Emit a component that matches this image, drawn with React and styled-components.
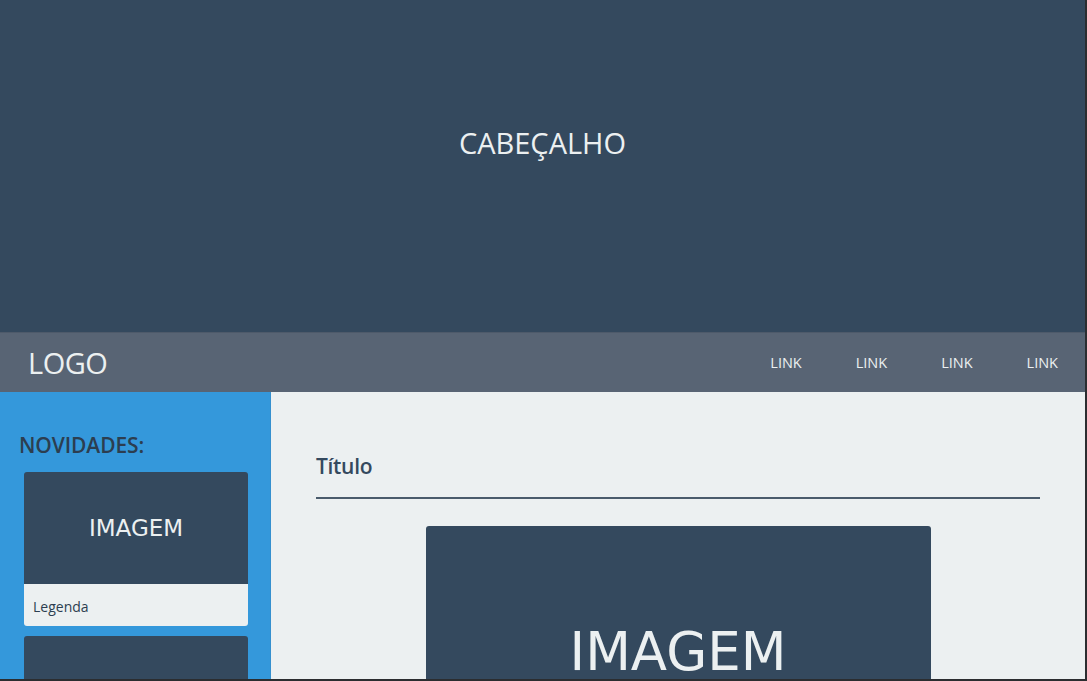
import React from 'react';
import styled, { createGlobalStyle } from 'styled-components';

const GlobalStyle = createGlobalStyle`
  html, body {
    margin: 0;
    padding: 0;
    background: #2b2d30;
    overflow: hidden;
  }
  * { box-sizing: border-box; }
`;

const links = ['LINK', 'LINK', 'LINK', 'LINK'];

export default function App() {
  return (
    <>
      <GlobalStyle />
      <Page>
        <Header>CABEÇALHO</Header>
        <Nav>
          <Logo>LOGO</Logo>
          <Links>
            {links.map((l, i) => <NavLink key={i}>{l}</NavLink>)}
          </Links>
        </Nav>
        <Body>
          <Sidebar>
            <SideTitle>NOVIDADES:</SideTitle>
            <Card>
              <CardImage>IMAGEM</CardImage>
              <Caption>Legenda</Caption>
            </Card>
            <Card>
              <CardImage>IMAGEM</CardImage>
              <Caption>Legenda</Caption>
            </Card>
          </Sidebar>
          <Main>
            <Title>Título</Title>
            <BigImage>IMAGEM</BigImage>
          </Main>
        </Body>
      </Page>
    </>
  );
}

const Page = styled.div`
  width: 1085px;
  height: 679px;
  overflow: hidden;
  display: flex;
  flex-direction: column;
  font-family: "Open Sans", "Liberation Sans", sans-serif;
  background: #ecf0f1;
`;

const Header = styled.header`
  flex: 0 0 332px;
  background: #34495e;
  color: #ecf0f1;
  font-size: 29px;
  display: flex;
  justify-content: center;
  padding-top: 122px;
  line-height: 42px;
`;

const Nav = styled.nav`
  flex: 0 0 60px;
  background: #586474;
  border-top: 1px solid #4e5a6a;
  display: flex;
  align-items: center;
  justify-content: space-between;
  padding-left: 28px;
`;

const Logo = styled.div`
  color: #ecf0f1;
  font-size: 29px;
  letter-spacing: -0.5px;
`;

const Links = styled.div`
  display: flex;
`;

const NavLink = styled.a`
  color: #ecf0f1;
  font-size: 14.5px;
  padding: 0 27px;
`;

const Body = styled.div`
  flex: 1;
  display: flex;
  min-height: 0;
`;

const Sidebar = styled.aside`
  flex: 0 0 271px;
  background: #3498db;
  border-right: 1px solid #3590cf;
  padding: 37px 22px 0 24px;
  display: flex;
  flex-direction: column;
  gap: 10px;
`;

const SideTitle = styled.h2`
  margin: 0 0 1px -5px;
  font-size: 21px;
  font-weight: 600;
  color: #2c3e50;
  line-height: 32px;
  letter-spacing: -0.1px;
`;

const Card = styled.div`
  flex: 0 0 auto;
  width: 224px;
  border-radius: 3px;
  overflow: hidden;
`;

const CardImage = styled.div`
  height: 112px;
  background: #34495e;
  color: #ecf0f1;
  font-family: "DejaVu Sans", Verdana, sans-serif;
  font-size: 23px;
  display: flex;
  align-items: center;
  justify-content: center;
`;

const Caption = styled.div`
  height: 42px;
  background: #ecf0f1;
  color: #2c3e50;
  font-size: 14px;
  padding: 13px 0 0 9px;
`;

const Main = styled.main`
  flex: 1;
  padding: 52px 45px 0 45px;
  display: flex;
  flex-direction: column;
  align-items: center;
`;

const Title = styled.h1`
  align-self: stretch;
  margin: 0;
  font-size: 21px;
  font-weight: 600;
  color: #34495e;
  line-height: 44px;
  padding-bottom: 9px;
  border-bottom: 2px solid #4a5b6c;
  letter-spacing: -0.3px;
`;

const BigImage = styled.div`
  margin-top: 27px;
  width: 505px;
  flex: 0 0 250px;
  border-radius: 3px;
  background: #34495e;
  color: #ecf0f1;
  font-family: "DejaVu Sans", Verdana, sans-serif;
  font-size: 53px;
  display: flex;
  align-items: center;
  justify-content: center;
`;
